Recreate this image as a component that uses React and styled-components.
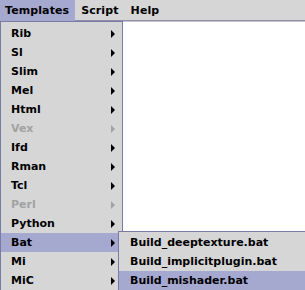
import React from "react";
import styled, { createGlobalStyle } from "styled-components";

const GlobalStyle = createGlobalStyle`
  html, body {
    margin: 0;
    padding: 0;
    background: #ffffff;
  }
  body {
    font-family: "DejaVu Sans", "Liberation Sans", sans-serif;
    font-weight: bold;
    font-size: 11px;
    color: #000;
  }
`;

const Frame = styled.div`
  position: relative;
  width: 305px;
  height: 290px;
  overflow: hidden;
  background: #ffffff;
`;

const MenuBar = styled.div`
  display: flex;
  align-items: stretch;
  height: 20px;
  background: #d6d6d6;
  border-bottom: 1px solid #8e8ea8;
  box-shadow: 0 1px 0 #c4c4d0;
`;

const MenuTitle = styled.div`
  display: flex;
  align-items: center;
  padding: 0 6px 0 5px;
  margin-right: 1px;
  height: 21px;
  box-sizing: border-box;
  background: ${(p) => (p.$active ? "#a5a8cf" : "transparent")};
  white-space: nowrap;
  letter-spacing: 0.1px;
`;

const Popup = styled.div`
  position: absolute;
  left: ${(p) => p.$left}px;
  top: ${(p) => p.$top}px;
  width: ${(p) => p.$width}px;
  box-sizing: border-box;
  background: #d6d6d6;
  border: 1px solid #7a7aa6;
  padding: ${(p) => p.$padTop}px 0 2px 0;
  display: flex;
  flex-direction: column;
`;

const Item = styled.div`
  display: flex;
  align-items: center;
  justify-content: space-between;
  height: 19px;
  padding: 0 7px 0 ${(p) => p.$indent}px;
  background: ${(p) => (p.$selected ? "#a5a8cf" : "transparent")};
  color: ${(p) => (p.$disabled ? "#a2a2a2" : "#000")};
  white-space: nowrap;
`;

const Arrow = styled.svg`
  width: 4px;
  height: 8px;
  display: block;
  fill: ${(p) => (p.$disabled ? "#a2a2a2" : "#000")};
`;

const items = [
  { label: "Rib" },
  { label: "Sl" },
  { label: "Slim" },
  { label: "Mel" },
  { label: "Html" },
  { label: "Vex", disabled: true },
  { label: "Ifd" },
  { label: "Rman" },
  { label: "Tcl" },
  { label: "Perl", disabled: true },
  { label: "Python" },
  { label: "Bat", selected: true },
  { label: "Mi" },
  { label: "MiC" },
];

const subItems = [
  { label: "Build_deeptexture.bat" },
  { label: "Build_implicitplugin.bat" },
  { label: "Build_mishader.bat", selected: true },
];

function SubArrow({ disabled }) {
  return (
    <Arrow $disabled={disabled} viewBox="0 0 4 8">
      <polygon points="0,0 4,4 0,8" />
    </Arrow>
  );
}

export default function App() {
  return (
    <Frame>
      <GlobalStyle />
      <MenuBar>
        <MenuTitle $active>Templates</MenuTitle>
        <MenuTitle>Script</MenuTitle>
        <MenuTitle>Help</MenuTitle>
      </MenuBar>
      <Popup $left={0} $top={21} $width={123} $padTop={2}>
        {items.map((it) => (
          <Item
            key={it.label}
            $indent={10}
            $selected={it.selected}
            $disabled={it.disabled}
          >
            <span>{it.label}</span>
            <SubArrow disabled={it.disabled} />
          </Item>
        ))}
        <Popup $left={117} $top={209} $width={200} $padTop={1}>
          {subItems.map((it) => (
            <Item key={it.label} $indent={11} $selected={it.selected}>
              <span>{it.label}</span>
            </Item>
          ))}
        </Popup>
      </Popup>
    </Frame>
  );
}
